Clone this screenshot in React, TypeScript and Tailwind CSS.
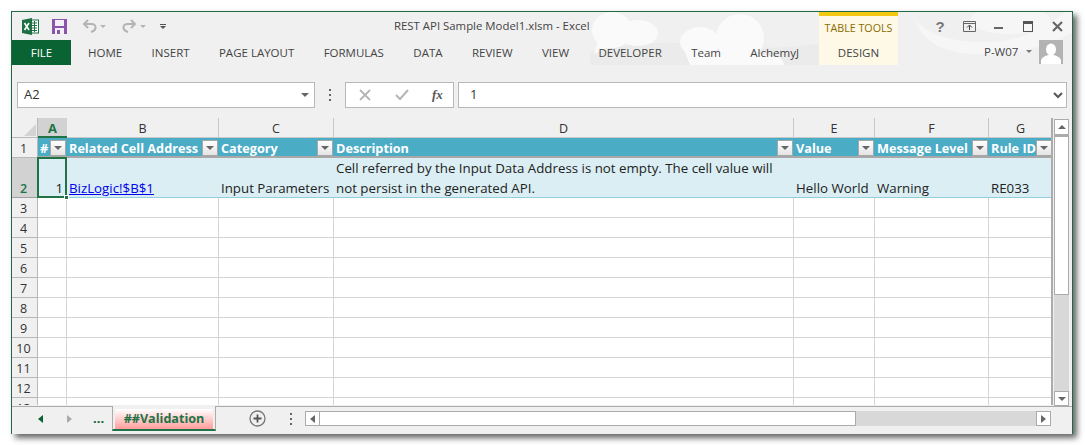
import React from 'react';

const FONT = "font-['Open_Sans',sans-serif]";
const colWidths = [29, 152, 115, 460, 81, 114, 64];
const colNames = ['A', 'B', 'C', 'D', 'E', 'F', 'G'];
const headers = ['#', 'Related Cell Address', 'Category', 'Description', 'Value', 'Message Level', 'Rule ID'];
const tabs = ['HOME', 'INSERT', 'PAGE LAYOUT', 'FORMULAS', 'DATA', 'REVIEW', 'VIEW', 'DEVELOPER', 'Team', 'AlchemyJ'];
const emptyRows = [3, 4, 5, 6, 7, 8, 9, 10, 11, 12, 13];

// ribbon background pattern, starts at x=590 of the page
function Clouds() {
  return (
    <svg className="absolute left-[578px] top-0" width="483" height="53" viewBox="0 0 483 53">
      <path d="M0 53 V40 Q60 26 120 33 T240 30 V53 Z" fill="#ebebeb" />
      <g fill="#fafafa">
        <ellipse cx="22" cy="18" rx="20" ry="18" />
        <ellipse cx="48" cy="21" rx="20" ry="13" />
        <path d="M8 30 L4 42 L24 32 Z" />
        <ellipse cx="110" cy="30" rx="20" ry="15" />
        <ellipse cx="150" cy="26" rx="24" ry="24" />
        <path d="M95 40 Q130 36 190 45 L195 53 L100 53 Z" />
      </g>
      <g fill="#f6f6f6">
        <path d="M325 8 Q345 30 395 30 Q440 30 475 0 H483 V20 Q440 45 380 42 Q335 38 325 8 Z" />
        <ellipse cx="420" cy="8" rx="40" ry="14" />
      </g>
    </svg>
  );
}

function ExcelLogo() {
  return (
    <svg width="17" height="17" viewBox="0 0 17 17">
      <rect x="8" y="2" width="8.5" height="13" fill="#fff" stroke="#1d7044" strokeWidth="1" />
      <path d="M10 5h5M10 7.5h5M10 10h5M10 12.5h5M12.5 3v11" stroke="#1d7044" strokeWidth="1" />
      <path d="M0 2 L10 0 V17 L0 15 Z" fill="#1d7044" />
      <path d="M2.5 5 L7 12 M7 5 L2.5 12" stroke="#fff" strokeWidth="1.6" />
    </svg>
  );
}

function SaveIcon() {
  return (
    <svg width="15" height="15" viewBox="0 0 15 15">
      <rect width="15" height="15" fill="#8a56ab" />
      <rect x="3" y="1" width="9" height="6" fill="#f4f0f7" />
      <rect x="3" y="9" width="9" height="6" fill="#f4f0f7" />
      <rect x="5" y="11" width="3" height="4" fill="#8a56ab" />
    </svg>
  );
}

function UndoIcon({ flip }: { flip?: boolean }) {
  return (
    <svg width="15" height="14" viewBox="0 0 15 14" className={flip ? '-scale-x-100' : ''}>
      <path d="M6 1 L2 5 L6 9" fill="none" stroke="#b4b4b4" strokeWidth="2" />
      <path d="M2 5 H9 Q14 5 13.5 9 Q13 12 9 13" fill="none" stroke="#b4b4b4" strokeWidth="2" />
    </svg>
  );
}

function Caret({ color = '#b4b4b4', w = 6 }: { color?: string; w?: number }) {
  return (
    <svg width={w} height={w / 2} viewBox="0 0 6 3">
      <path d="M0 0 H6 L3 3 Z" fill={color} />
    </svg>
  );
}

function Dots() {
  return (
    <div className="flex flex-col gap-[3px]">
      <div className="w-[2px] h-[2px] bg-[#666]" />
      <div className="w-[2px] h-[2px] bg-[#666]" />
      <div className="w-[2px] h-[2px] bg-[#666]" />
    </div>
  );
}

function WindowButtons() {
  return (
    <div className="h-[28px] flex items-center pl-[35px]">
      <span className="w-[14px] text-center text-[15px] font-bold text-[#777] font-['Liberation_Sans',sans-serif] leading-none">?</span>
      <svg width="13" height="11" viewBox="0 0 13 11" className="ml-[16px]">
        <path d="M.5.5h12v10H.5z M.5 2.5h12" fill="none" stroke="#666" />
        <path d="M6.5 9V4.5 M4 6.5l2.5-2.5L9 6.5" fill="none" stroke="#444" />
      </svg>
      <div className="ml-[18px] w-[9px] h-[2px] mt-[3px] bg-[#666]" />
      <div className="ml-[20px] w-[10px] h-[11px] border border-[#555] border-t-[3px]" />
      <svg width="11" height="11" viewBox="0 0 11 11" className="ml-[19px]">
        <path d="M1 1 L10 10 M10 1 L1 10" stroke="#666" strokeWidth="2.2" />
      </svg>
    </div>
  );
}

function Avatar() {
  return (
    <svg width="24" height="24" viewBox="0 0 24 24">
      <rect width="24" height="24" fill="#b3b3b3" />
      <ellipse cx="12" cy="9.5" rx="5" ry="6" fill="#fff" />
      <path d="M2 24 V20 Q3 17 9 15 H15 Q21 17 22 20 V24 Z" fill="#fff" />
    </svg>
  );
}

function Header() {
  return (
    <div className="relative flex h-[53px] overflow-hidden">
      <Clouds />
      <div className="relative w-[807px] shrink-0 flex flex-col">
        <div className="h-[28px] flex items-center pl-[10px]">
          <ExcelLogo />
          <div className="ml-[13px]"><SaveIcon /></div>
          <div className="ml-[15px]"><UndoIcon /></div>
          <div className="ml-[3px]"><Caret /></div>
          <div className="ml-[16px]"><UndoIcon flip /></div>
          <div className="ml-[3px]"><Caret /></div>
          <div className="ml-[14px] flex flex-col items-center gap-[1px]">
            <div className="w-[6px] h-[1px] bg-[#555]" />
            <Caret color="#555" />
          </div>
          <span className="ml-[228px] text-[11.4px] text-[#444] whitespace-nowrap">REST API Sample Model1.xlsm - Excel</span>
        </div>
        <div className="h-[25px] flex items-center text-[11.5px] text-[#444]">
          <div className="w-[59px] h-[25px] bg-[#0a6332] text-white flex items-center justify-center">FILE</div>
          <div className="ml-[17px] flex gap-[29.4px] whitespace-nowrap">
            {tabs.map((t) => <span key={t}>{t}</span>)}
          </div>
        </div>
      </div>
      <div className="relative w-[79px] shrink-0 bg-[#fef9e7] border-t-[4px] border-[#f2c811] flex flex-col items-center text-[11.5px]">
        <div className="h-[24px] flex items-center text-[10.7px] text-[#8a6d00] whitespace-nowrap">TABLE TOOLS</div>
        <div className="h-[25px] flex items-center text-[#444]">DESIGN</div>
      </div>
      <div className="relative flex-1 flex flex-col">
        <WindowButtons />
        <div className="h-[25px] flex items-start pl-[86px] text-[11.5px] text-[#444]">
          <span className="mt-[3px] whitespace-nowrap">P-W07</span>
          <div className="ml-[8px] mt-[10px]"><Caret color="#777" /></div>
          <div className="ml-[7px]"><Avatar /></div>
        </div>
      </div>
    </div>
  );
}

function FormulaBar() {
  return (
    <div className="mt-[17px] ml-[5px] mr-[5px] h-[26px] flex items-stretch text-[13px] text-[#333]">
      <div className="w-[298px] bg-white border border-[#b8b8b8] flex items-center pl-[6px] pr-[5px] justify-between">
        <span>A2</span>
        <Caret color="#666" w={8} />
      </div>
      <div className="w-[30px] flex items-center justify-center"><Dots /></div>
      <div className="w-[109px] bg-white border border-[#b8b8b8] flex items-center pl-[13px] gap-[24px]">
        <svg width="12" height="12" viewBox="0 0 12 12"><path d="M1 1 L11 11 M11 1 L1 11" stroke="#b5b5b5" strokeWidth="1.8" /></svg>
        <svg width="14" height="12" viewBox="0 0 14 12"><path d="M1 6 L5 10 L13 1" fill="none" stroke="#b5b5b5" strokeWidth="2" /></svg>
        <span className="font-['Liberation_Serif',serif] italic font-bold text-[13px] text-[#555] -ml-[1px]">fx</span>
      </div>
      <div className="ml-[4px] flex-1 bg-white border border-[#b8b8b8] flex items-center pl-[11px] pr-[3px] justify-between">
        <span>1</span>
        <svg width="10" height="7" viewBox="0 0 10 7"><path d="M1 1 L5 5 L9 1" fill="none" stroke="#555" strokeWidth="2" /></svg>
      </div>
    </div>
  );
}

function FilterButton() {
  return (
    <div className="absolute right-[1px] top-[2px] w-[16px] h-[16px] border border-[#a6a6a6] bg-gradient-to-b from-white to-[#e4e4e4] flex items-center justify-center">
      <Caret color="#666" w={8} />
    </div>
  );
}

function RowHeader({ n, active, h }: { n: number; active?: boolean; h: string }) {
  return (
    <div className={`w-[26px] shrink-0 ${h} flex items-end justify-center pr-[2px] border-r border-b text-[12.5px] ${active ? 'bg-[#d2d2d2] text-[#217346] font-semibold border-[#a0a0a0]' : 'border-[#b8b8b8] bg-[#f0f0f0] text-[#333]'}`}>
      <span className="leading-[17px]">{n}</span>
    </div>
  );
}

function Sheet() {
  return (
    <div className="relative w-[1041px] shrink-0 overflow-hidden bg-white text-[13.3px] text-[#222] h-[287px] border-r-2 border-[#ababab]">
      <div className="flex h-[20px] bg-[#f0f0f0] text-[12.5px] leading-[21px]">
        <div className="w-[26px] shrink-0 border-r border-b border-[#b8b8b8] relative">
          <svg width="12" height="12" viewBox="0 0 12 12" className="absolute right-[1px] bottom-[1px]"><path d="M12 0 V12 H0 Z" fill="#d4d4d4" /></svg>
        </div>
        {colNames.map((c, i) => (
          <div
            key={c}
            style={{ width: colWidths[i] }}
            className={`shrink-0 text-center ${i === 0 ? 'bg-[#d2d2d2] text-[#217346] font-bold border-b-2 border-[#217346] text-[13px]' : 'border-r border-b border-[#c8c8c8] text-[#333]'}`}
          >
            {c}
          </div>
        ))}
      </div>
      <div className="flex h-[20px]">
        <RowHeader n={1} h="h-[20px]" />
        {headers.map((t, i) => (
          <div
            key={t}
            style={{ width: colWidths[i] }}
            className="relative shrink-0 bg-[#4bacc6] border-b-2 border-[#a8a8a8] text-white text-[12.7px] font-bold pl-[2px] leading-[20px] whitespace-nowrap overflow-hidden"
          >
            {t}
            <FilterButton />
          </div>
        ))}
      </div>
      <div className="flex h-[40px]">
        <RowHeader n={2} active h="h-[40px]" />
        {['1', 'BizLogic!$B$1', 'Input Parameters', 'Cell referred by the Input Data Address is not empty. The cell value will not persist in the generated API.', 'Hello World', 'Warning', 'RE033'].map((t, i) => (
          <div
            key={i}
            style={{ width: colWidths[i] }}
            className={`shrink-0 bg-[#daeef3] border-b border-[#92cddc] pl-[2px] leading-[20px] flex items-end ${i === 0 ? 'justify-end pr-[4px]' : ''} ${i === 1 ? 'text-[#0000ee] underline' : ''}`}
          >
            <span className={i === 3 ? 'block w-[445px] translate-y-[1px]' : 'whitespace-nowrap translate-y-[1px]'}>{t}</span>
          </div>
        ))}
      </div>
      {emptyRows.map((n) => (
        <div key={n} className="flex h-[20px]">
          <RowHeader n={n} h="h-[20px]" />
          {colWidths.map((w, i) => (
            <div key={i} style={{ width: w }} className="shrink-0 border-r border-b border-[#d4d4d4]" />
          ))}
        </div>
      ))}
      <div className="absolute left-[25px] top-[39px] w-[30px] h-[41px] border-2 border-[#217346]" />
      <div className="absolute left-[52px] top-[77px] w-[5px] h-[5px] bg-[#217346] border border-white" />
    </div>
  );
}

function VScroll() {
  return (
    <div className="w-[15px] ml-[1px] mt-[1px] flex flex-col bg-[#d8d8d8] h-[287px]">
      <div className="h-[16px] bg-white border border-[#ababab] flex items-center justify-center">
        <svg width="8" height="4" viewBox="0 0 6 3"><path d="M0 3 H6 L3 0 Z" fill="#666" /></svg>
      </div>
      <div className="h-[160px] bg-white border border-[#ababab] border-t-2" />
      <div className="flex-1" />
      <div className="h-[15px] bg-white border border-[#ababab] flex items-center justify-center">
        <Caret color="#666" w={8} />
      </div>
    </div>
  );
}

function SheetTabs() {
  return (
    <div className="flex h-[28px] bg-[#f0f0f0]">
      <div className="w-[100px] h-[28px] border-t border-[#ababab] flex items-center text-[#0a6332] font-bold text-[13px] pb-[4px] pl-[26px]">
        <svg width="5" height="8" viewBox="0 0 5 8"><path d="M5 0 V8 L0 4 Z" fill="#0a6332" /></svg>
        <svg width="5" height="8" viewBox="0 0 5 8" className="ml-[24px]"><path d="M0 0 V8 L5 4 Z" fill="#aaa" /></svg>
        <span className="ml-[21px] leading-none">...</span>
      </div>
      <div className="w-[104px] h-[25px] border-x border-[#ababab] border-b-2 border-b-[#217346] px-[2px] pt-[3px] shrink-0">
        <div className="h-[20px] bg-gradient-to-b from-white to-[#ff9c9c] flex items-center justify-center font-bold text-[12.6px] text-[#217346] whitespace-nowrap">
          ##Validation
        </div>
      </div>
      <div className="flex-1 h-[28px] border-t border-[#ababab] flex items-center pl-[33px] pb-[4px]">
        <svg width="17" height="17" viewBox="0 0 17 17">
          <circle cx="8.5" cy="8.5" r="7.5" fill="none" stroke="#777" strokeWidth="1.3" />
          <path d="M8.5 4.5 V12.5 M4.5 8.5 H12.5" stroke="#555" strokeWidth="1.8" />
        </svg>
        <div className="ml-[24px]"><Dots /></div>
        <div className="ml-[13px] flex h-[15px] w-[746px]">
          <div className="w-[15px] bg-white border border-[#ababab] flex items-center justify-center">
            <svg width="5" height="8" viewBox="0 0 5 8"><path d="M5 0 V8 L0 4 Z" fill="#666" /></svg>
          </div>
          <div className="w-[536px] bg-white border-y border-r border-[#ababab]" />
          <div className="flex-1 bg-[#d8d8d8]" />
          <div className="w-[15px] bg-white border border-[#ababab] flex items-center justify-center">
            <svg width="5" height="8" viewBox="0 0 5 8"><path d="M0 0 V8 L5 4 Z" fill="#666" /></svg>
          </div>
        </div>
      </div>
    </div>
  );
}

export default function App() {
  return (
    <div className={`w-[1085px] h-[445px] bg-white pl-[11px] pt-[11px] overflow-hidden ${FONT}`}>
      <div className="w-[1062px] h-[423px] bg-[#f0f0f0] border border-[#1f6b45] shadow-[4px_4px_6px_#666]">
        <Header />
        <FormulaBar />
        <div className="mt-[10px] flex items-start">
          <Sheet />
          <VScroll />
        </div>
        <SheetTabs />
      </div>
    </div>
  );
}
